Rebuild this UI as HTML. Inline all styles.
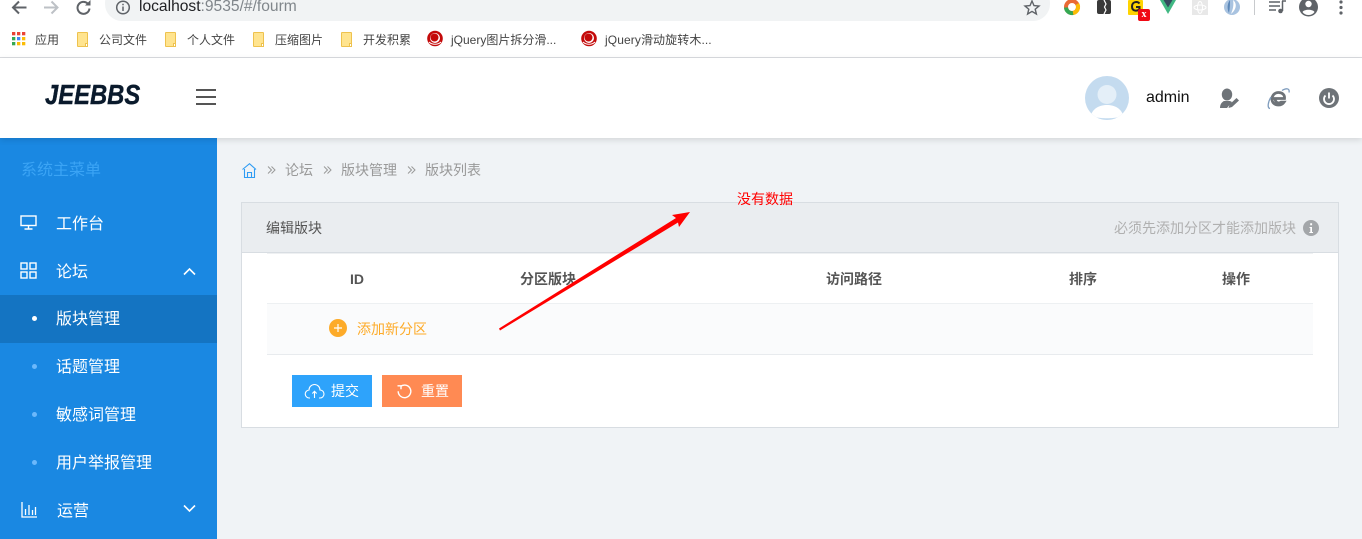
<!DOCTYPE html>
<html lang="zh">
<head>
<meta charset="utf-8">
<title>JEEBBS</title>
<style>
html,body{margin:0;padding:0;width:1362px;height:539px;overflow:hidden;background:#f0f3f6;font-family:"Liberation Sans","Noto Sans CJK SC",sans-serif;}
.a{position:absolute;}
.t{position:absolute;white-space:nowrap;line-height:20px;height:20px;}
svg{position:absolute;display:block;overflow:visible;}
.bm{font-size:12px;color:#444;top:30px;}
.folder{position:absolute;top:32px;width:11px;height:15px;background:#ffe48f;border:1px solid #eec24e;box-sizing:border-box;border-radius:1px;}
.folder:after{content:"";position:absolute;right:-1px;bottom:-1px;width:3px;height:4px;background:#fff;border:1px solid #eec24e;box-sizing:border-box;}
.menu{font-size:16px;color:#fff;}
.dot{position:absolute;left:32px;width:5px;height:5px;border-radius:50%;background:#6cb8fb;}
.crumb{font-size:14px;color:#999;top:160px;}
.th{font-size:14px;font-weight:bold;color:#555;top:269px;}
</style>
</head>
<body>
<!-- browser chrome -->
<div class="a" style="left:0;top:0;width:1362px;height:57px;background:#fff;"></div>
<div class="a" style="left:0;top:57px;width:1362px;height:1px;background:#dadce0;"></div>
<svg style="left:11px;top:0" width="60" height="16" viewBox="0 0 60 16" fill="none">
<path d="M15.500 7.500H2M8 1.500l-6 6 6 6" stroke="#5f6368" stroke-width="2"/>
<path d="M33 7.500h13.500M40.500 1.500l6 6-6 6" stroke="#bdc1c6" stroke-width="2"/>
</svg>
<svg style="left:75px;top:0" width="18" height="16" viewBox="0 0 18 16" fill="none">
<path d="M14.500 8.500a6 6 0 1 1-1.800-5" stroke="#5f6368" stroke-width="2"/>
<path d="M15.500 0v5.500H10z" fill="#5f6368"/>
</svg>
<div class="a" style="left:105px;top:-14px;width:945px;height:35px;border-radius:17px;background:#f1f3f4;"></div>
<svg style="left:115px;top:0" width="16" height="16" viewBox="0 0 16 16" fill="none">
<circle cx="8" cy="7.500" r="6.300" stroke="#5f6368" stroke-width="1.500"/>
<path d="M8 6.500v4.500M8 3.800v1.500" stroke="#5f6368" stroke-width="1.500"/>
</svg>
<div class="t" style="left:139px;top:-3px;font-size:15.600px;color:#80868b;"><span style="color:#202124">localhost</span>:9535/#/fourm</div>
<svg style="left:1024px;top:0" width="16" height="15" viewBox="0 0 16 15" fill="none">
<path d="M8 1l2 4.600 5 .4-3.800 3.200L12.400 14 8 11.400 3.600 14l1.200-4.800L1 6l5-.4z" stroke="#5f6368" stroke-width="1.400"/>
</svg>
<!-- extensions -->
<svg style="left:1063px;top:0" width="18" height="16" viewBox="0 0 18 16" fill="none">
<circle cx="9" cy="7" r="6" stroke="#ea6a35" stroke-width="4"/>
<path d="M14.200 4A6 6 0 0 1 10 13" stroke="#fbbc05" stroke-width="4"/>
<path d="M10 13A6 6 0 0 1 3 7.500" stroke="#34a853" stroke-width="4"/>
</svg>
<div class="a" style="left:1097px;top:0;width:14px;height:14px;border-radius:2px;background:#3a3a3a;"></div>
<svg style="left:1097px;top:0" width="14" height="14" viewBox="0 0 14 14" fill="none"><path d="M7 0l2 4-1.500 3L9 10l-2 4" stroke="#fff" stroke-width="1.200"/></svg>
<div class="a" style="left:1128px;top:0;width:15px;height:15px;background:#ffd400;border-radius:1px;"></div>
<svg style="left:1128px;top:0" width="15" height="15" viewBox="0 0 15 15" fill="none"><path d="M11.500 3.500C9.500 1 4 1.500 4 6.500s5.500 5 7.500 2.500V7H8" stroke="#222" stroke-width="2"/></svg>
<div class="a" style="left:1138px;top:9px;width:12px;height:12px;background:#f00a14;border-radius:2px;color:#fff;font:bold 10px/12px 'Liberation Serif',serif;text-align:center;">x</div>
<svg style="left:1160px;top:0" width="16" height="14" viewBox="0 0 16 14"><path d="M0 0h16L8 14z" fill="#41b883"/><path d="M3.500 0h9L8 7.500z" fill="#35495e"/></svg>
<div class="a" style="left:1192px;top:0;width:16px;height:15px;background:#e8e8e8;"></div>
<svg style="left:1192px;top:0" width="16" height="15" viewBox="0 0 16 15" fill="none"><ellipse cx="8" cy="7.500" rx="6" ry="2.500" stroke="#fff"/><ellipse cx="8" cy="7.500" rx="2.500" ry="6" stroke="#fff"/></svg>
<svg style="left:1224px;top:0" width="16" height="15" viewBox="0 0 16 15"><circle cx="8" cy="7" r="8" fill="#a9c3e0"/><path d="M9 0c4 3 4 9-2 14 2-5 3-9 2-14z" fill="#fff"/><path d="M6 0C3 4 3 9 5 13 6 8 6 4 6 0z" fill="#5b87b8"/></svg>
<div class="a" style="left:1254px;top:0;width:1px;height:15px;background:#c8cacd;"></div>
<svg style="left:1269px;top:0" width="18" height="15" viewBox="0 0 18 15" fill="none">
<path d="M0 2h11M0 6h11M0 10h7" stroke="#5f6368" stroke-width="1.500"/>
<path d="M13.500 1v10" stroke="#5f6368" stroke-width="1.500"/><path d="M13 1h4" stroke="#5f6368" stroke-width="1.500"/><circle cx="11.500" cy="11" r="2.300" fill="#5f6368"/>
</svg>
<svg style="left:1299px;top:0" width="20" height="17" viewBox="0 0 20 17">
<circle cx="9.500" cy="7" r="9.500" fill="#5f6368"/><circle cx="9.500" cy="4" r="3.200" fill="#fff"/><path d="M3.500 12c1.500-3 10.500-3 12 0-1.500 2-3.500 3-6 3s-4.500-1-6-3z" fill="#fff"/>
</svg>
<svg style="left:1339px;top:0" width="4" height="15" viewBox="0 0 4 15" fill="#5f6368"><circle cx="2" cy="2" r="1.600"/><circle cx="2" cy="7.500" r="1.600"/><circle cx="2" cy="13" r="1.600"/></svg>

<!-- bookmarks -->
<svg style="left:12px;top:32px" width="14" height="14" viewBox="0 0 14 14">
<rect x="0" y="0" width="3.300" height="3.300" fill="#ea4335"/><rect x="5" y="0" width="3.300" height="3.300" fill="#ea4335"/><rect x="10" y="0" width="3.300" height="3.300" fill="#ea4335"/>
<rect x="0" y="5" width="3.300" height="3.300" fill="#34a853"/><rect x="5" y="5" width="3.300" height="3.300" fill="#4285f4"/><rect x="10" y="5" width="3.300" height="3.300" fill="#fbbc05"/>
<rect x="0" y="10" width="3.300" height="3.300" fill="#34a853"/><rect x="5" y="10" width="3.300" height="3.300" fill="#fbbc05"/><rect x="10" y="10" width="3.300" height="3.300" fill="#fbbc05"/>
</svg>
<div class="t bm" style="left:35px">应用</div>
<div class="folder" style="left:77px"></div>
<div class="t bm" style="left:99px">公司文件</div>
<div class="folder" style="left:165px"></div>
<div class="t bm" style="left:187px">个人文件</div>
<div class="folder" style="left:253px"></div>
<div class="t bm" style="left:275px">压缩图片</div>
<div class="folder" style="left:341px"></div>
<div class="t bm" style="left:363px">开发积累</div>
<svg style="left:427px;top:31px" width="16" height="16" viewBox="0 0 16 16" fill="none"><circle cx="8" cy="7.500" r="7.800" fill="#c40a0a"/><circle cx="8" cy="7" r="5" fill="#fff"/><circle cx="7.500" cy="6.500" r="4" fill="#c40a0a"/><path d="M2 11c3 3 9 3 12 0" stroke="#fff"/></svg>
<div class="t bm" style="left:451px">jQuery图片拆分滑...</div>
<svg style="left:581px;top:31px" width="16" height="16" viewBox="0 0 16 16" fill="none"><circle cx="8" cy="7.500" r="7.800" fill="#c40a0a"/><circle cx="8" cy="7" r="5" fill="#fff"/><circle cx="7.500" cy="6.500" r="4" fill="#c40a0a"/><path d="M2 11c3 3 9 3 12 0" stroke="#fff"/></svg>
<div class="t bm" style="left:605px;letter-spacing:.1px">jQuery滑动旋转木...</div>

<!-- app header -->
<div class="a" style="left:0;top:58px;width:1362px;height:80px;background:#fff;box-shadow:0 2px 6px rgba(0,0,0,.12);z-index:2;"></div>
<div style="position:absolute;left:0;top:0;z-index:3;">
<div class="t" style="left:45px;top:81px;height:28px;line-height:28px;font-size:28px;font-weight:bold;font-style:italic;color:#0a1a2c;transform:scaleX(.85);transform-origin:0 50%;-webkit-text-stroke:.4px #0a1a2c;">JEEBBS</div>
<svg style="left:196px;top:88px" width="20" height="18" viewBox="0 0 20 18" fill="none"><path d="M0 2h20M0 9h20M0 16h20" stroke="#555" stroke-width="2"/></svg>
<svg style="left:1085px;top:76px" width="44" height="44" viewBox="0 0 44 44">
<defs><clipPath id="c"><circle cx="22" cy="22" r="22"/></clipPath></defs>
<circle cx="22" cy="22" r="22" fill="#c4dbef"/>
<g clip-path="url(#c)"><circle cx="22" cy="18.500" r="9.500" fill="#e4eff8"/><path d="M5 42c2-10 10-13 17-13s15 3 17 13v4H5z" fill="#fff"/><path d="M1 37c6 7 36 7 42 0l0 10H1z" fill="#c4dbef"/></g>
</svg>
<div class="t" style="left:1146px;top:88px;font-size:16px;color:#111;">admin</div>
<svg style="left:1219px;top:88px" width="22" height="21" viewBox="0 0 22 21">
<ellipse cx="8" cy="6.500" rx="5.200" ry="6" fill="#6e7378"/><path d="M1 20c0-4 2-6 4-7h6l2 1-5 6z" fill="#6e7378"/><path d="M9.500 20l1-3.500 7-6.500 2.500 2.500-7 6.500z" fill="#6e7378"/>
</svg>
<svg style="left:1268px;top:88px" width="22" height="21" viewBox="0 0 22 21" fill="none">
<path d="M4.500 10.500h12c.5-3.500-2-6-6-6-4 0-6.500 3-6.500 6.500 0 3.700 2.700 6 6.300 6 2.500 0 4.500-1 5.700-2.800h-3c-2.500 1.500-5.500.5-5.700-2.500" stroke="#6e7378" stroke-width="2.800"/>
<path d="M3 9C0 14-1 20 2 20.500M14 2.500c4-2.500 8-2.500 7 2" stroke="#7f9cbd" stroke-width="1.300"/>
</svg>
<svg style="left:1319px;top:88px" width="20" height="20" viewBox="0 0 20 20" fill="none">
<circle cx="10" cy="10" r="10" fill="#6e7378"/>
<path d="M6.500 7.500a5 5 0 1 0 7 0" stroke="#fff" stroke-width="1.800"/><path d="M10 4.500v6" stroke="#fff" stroke-width="1.800"/>
</svg>
</div>

<!-- sidebar -->
<div class="a" style="left:0;top:138px;width:217px;height:401px;background:#1a88e2;"></div>
<div class="t" style="left:21px;top:161px;font-size:16px;color:#3ba4f5;">系统主菜单</div>
<svg style="left:20px;top:215px" width="17" height="15" viewBox="0 0 17 15" fill="none"><rect x="1" y="1" width="15" height="9.500" stroke="#fff" stroke-width="1.400"/><path d="M8.500 10.500v3M4.500 14h8" stroke="#fff" stroke-width="1.400"/></svg>
<div class="t menu" style="left:56px;top:215px">工作台</div>
<svg style="left:20px;top:262px" width="17" height="17" viewBox="0 0 17 17" fill="none" stroke="#fff" stroke-width="1.400"><rect x="1" y="1" width="6" height="6"/><rect x="10" y="1" width="6" height="6"/><rect x="1" y="10" width="6" height="6"/><rect x="10" y="10" width="6" height="6"/></svg>
<div class="t menu" style="left:56px;top:263px">论坛</div>
<svg style="left:183px;top:267px" width="13" height="9" viewBox="0 0 13 9" fill="none"><path d="M1 7.500l5.500-5.500 5.500 5.500" stroke="#fff" stroke-width="1.600"/></svg>
<div class="a" style="left:0;top:295px;width:217px;height:48px;background:#1474c2;"></div>
<div class="dot" style="top:316px;background:#fff"></div>
<div class="t menu" style="left:56px;top:310px">版块管理</div>
<div class="dot" style="top:364px"></div>
<div class="t menu" style="left:56px;top:358px">话题管理</div>
<div class="dot" style="top:412px"></div>
<div class="t menu" style="left:56px;top:406px">敏感词管理</div>
<div class="dot" style="top:460px"></div>
<div class="t menu" style="left:56px;top:454px">用户举报管理</div>
<svg style="left:21px;top:502px" width="16" height="16" viewBox="0 0 16 16" fill="none" stroke="#fff" stroke-width="1.300"><path d="M1 0v15h15"/><path d="M4.500 7v6M8 3v10M11.500 8v5M14.500 5v8"/></svg>
<div class="t menu" style="left:57px;top:502px">运营</div>
<svg style="left:183px;top:504px" width="13" height="9" viewBox="0 0 13 9" fill="none"><path d="M1 1.500l5.500 5.500 5.500-5.500" stroke="#fff" stroke-width="1.600"/></svg>

<!-- breadcrumb -->
<svg style="left:242px;top:163px" width="15" height="15" viewBox="0 0 15 15" fill="none" stroke="#2f9cf3" stroke-width="1.100"><path d="M.5 6.500L7.500 .7l6.500 5.800"/><path d="M2.500 6v8.500h10V6"/><path d="M5.500 14.500v-5h4v5"/></svg>
<svg style="left:267px;top:166px" width="9" height="8" viewBox="0 0 9 8" fill="none" stroke="#999"><path d="M1 .5l3.500 3.500L1 7.500M4.500 .5L8 4 4.500 7.500"/></svg>
<div class="t crumb" style="left:285px">论坛</div>
<svg style="left:323px;top:166px" width="9" height="8" viewBox="0 0 9 8" fill="none" stroke="#999"><path d="M1 .5l3.500 3.500L1 7.500M4.500 .5L8 4 4.500 7.500"/></svg>
<div class="t crumb" style="left:341px">版块管理</div>
<svg style="left:407px;top:166px" width="9" height="8" viewBox="0 0 9 8" fill="none" stroke="#999"><path d="M1 .5l3.500 3.500L1 7.500M4.500 .5L8 4 4.500 7.500"/></svg>
<div class="t crumb" style="left:425px">版块列表</div>

<!-- panel -->
<div class="a" style="left:241px;top:202px;width:1098px;height:226px;box-sizing:border-box;border:1px solid #d8dde2;background:#fff;"></div>
<div class="a" style="left:242px;top:203px;width:1096px;height:50px;box-sizing:border-box;background:#eaedf0;border-bottom:1px solid #d8dde2;"></div>
<div class="t" style="left:266px;top:218px;font-size:14px;color:#555;">编辑版块</div>
<div class="t" style="left:1114px;top:218px;font-size:14px;color:#b0b0b0;">必须先添加分区才能添加版块</div>
<svg style="left:1303px;top:220px" width="16" height="16" viewBox="0 0 16 16"><circle cx="8" cy="8" r="8" fill="#a3a6a9"/><path d="M6.500 7h2.500v5h1v1H6.300v-1h1v-4h-.8zM7.200 3.300h1.900v2H7.200z" fill="#fff"/></svg>

<div class="a" style="left:267px;top:253px;width:1046px;height:1px;background:#eef0f2;"></div>
<div class="t th" style="left:350px">ID</div>
<div class="t th" style="left:520px">分区版块</div>
<div class="t th" style="left:826px">访问路径</div>
<div class="t th" style="left:1069px">排序</div>
<div class="t th" style="left:1222px">操作</div>
<div class="a" style="left:267px;top:303px;width:1046px;height:52px;box-sizing:border-box;background:#fafbfc;border-top:1px solid #edf0f2;border-bottom:1px solid #e8ebee;"></div>
<svg style="left:329px;top:319px" width="18" height="18" viewBox="0 0 18 18"><circle cx="9" cy="9" r="9" fill="#fdab29"/><path d="M5 9h8M9 5v8" stroke="#fff" stroke-width="1.200"/></svg>
<div class="t" style="left:357px;top:319px;font-size:14px;color:#fdab29;">添加新分区</div>

<div class="a" style="left:292px;top:375px;width:80px;height:32px;background:#2ea3fb;"></div>
<svg style="left:305px;top:383px" width="19" height="16" viewBox="0 0 19 16" fill="none" stroke="#fff" stroke-width="1.100"><path d="M5 15H4.500a4 4 0 0 1-.5-8 5.500 5.500 0 0 1 11 0 4 4 0 0 1 0 8H14"/><path d="M9.500 15V8.500M7.300 10.500l2.200-2.200 2.200 2.200"/></svg>
<div class="t" style="left:331px;top:381px;font-size:14px;color:#fff;">提交</div>
<div class="a" style="left:382px;top:375px;width:80px;height:32px;background:#ff8a53;"></div>
<svg style="left:397px;top:384px" width="16" height="15" viewBox="0 0 16 15" fill="none" stroke="#fff" stroke-width="1.400"><path d="M3.500 2.500a6.300 6.300 0 1 1-2.300 4.800"/><path d="M.5 1.800h3.500v3.500"/></svg>
<div class="t" style="left:421px;top:381px;font-size:14px;color:#fff;">重置</div>

<!-- annotation -->
<div class="t" style="left:737px;top:189px;font-size:14px;color:#f00;">没有数据</div>
<svg style="left:0;top:0;z-index:4" width="1362" height="539" viewBox="0 0 1362 539">
<path d="M499 328.500L676 218 672 215 690 212 679 227 678 222.500 500 330.500z" fill="#f00"/>
</svg>
</body>
</html>
